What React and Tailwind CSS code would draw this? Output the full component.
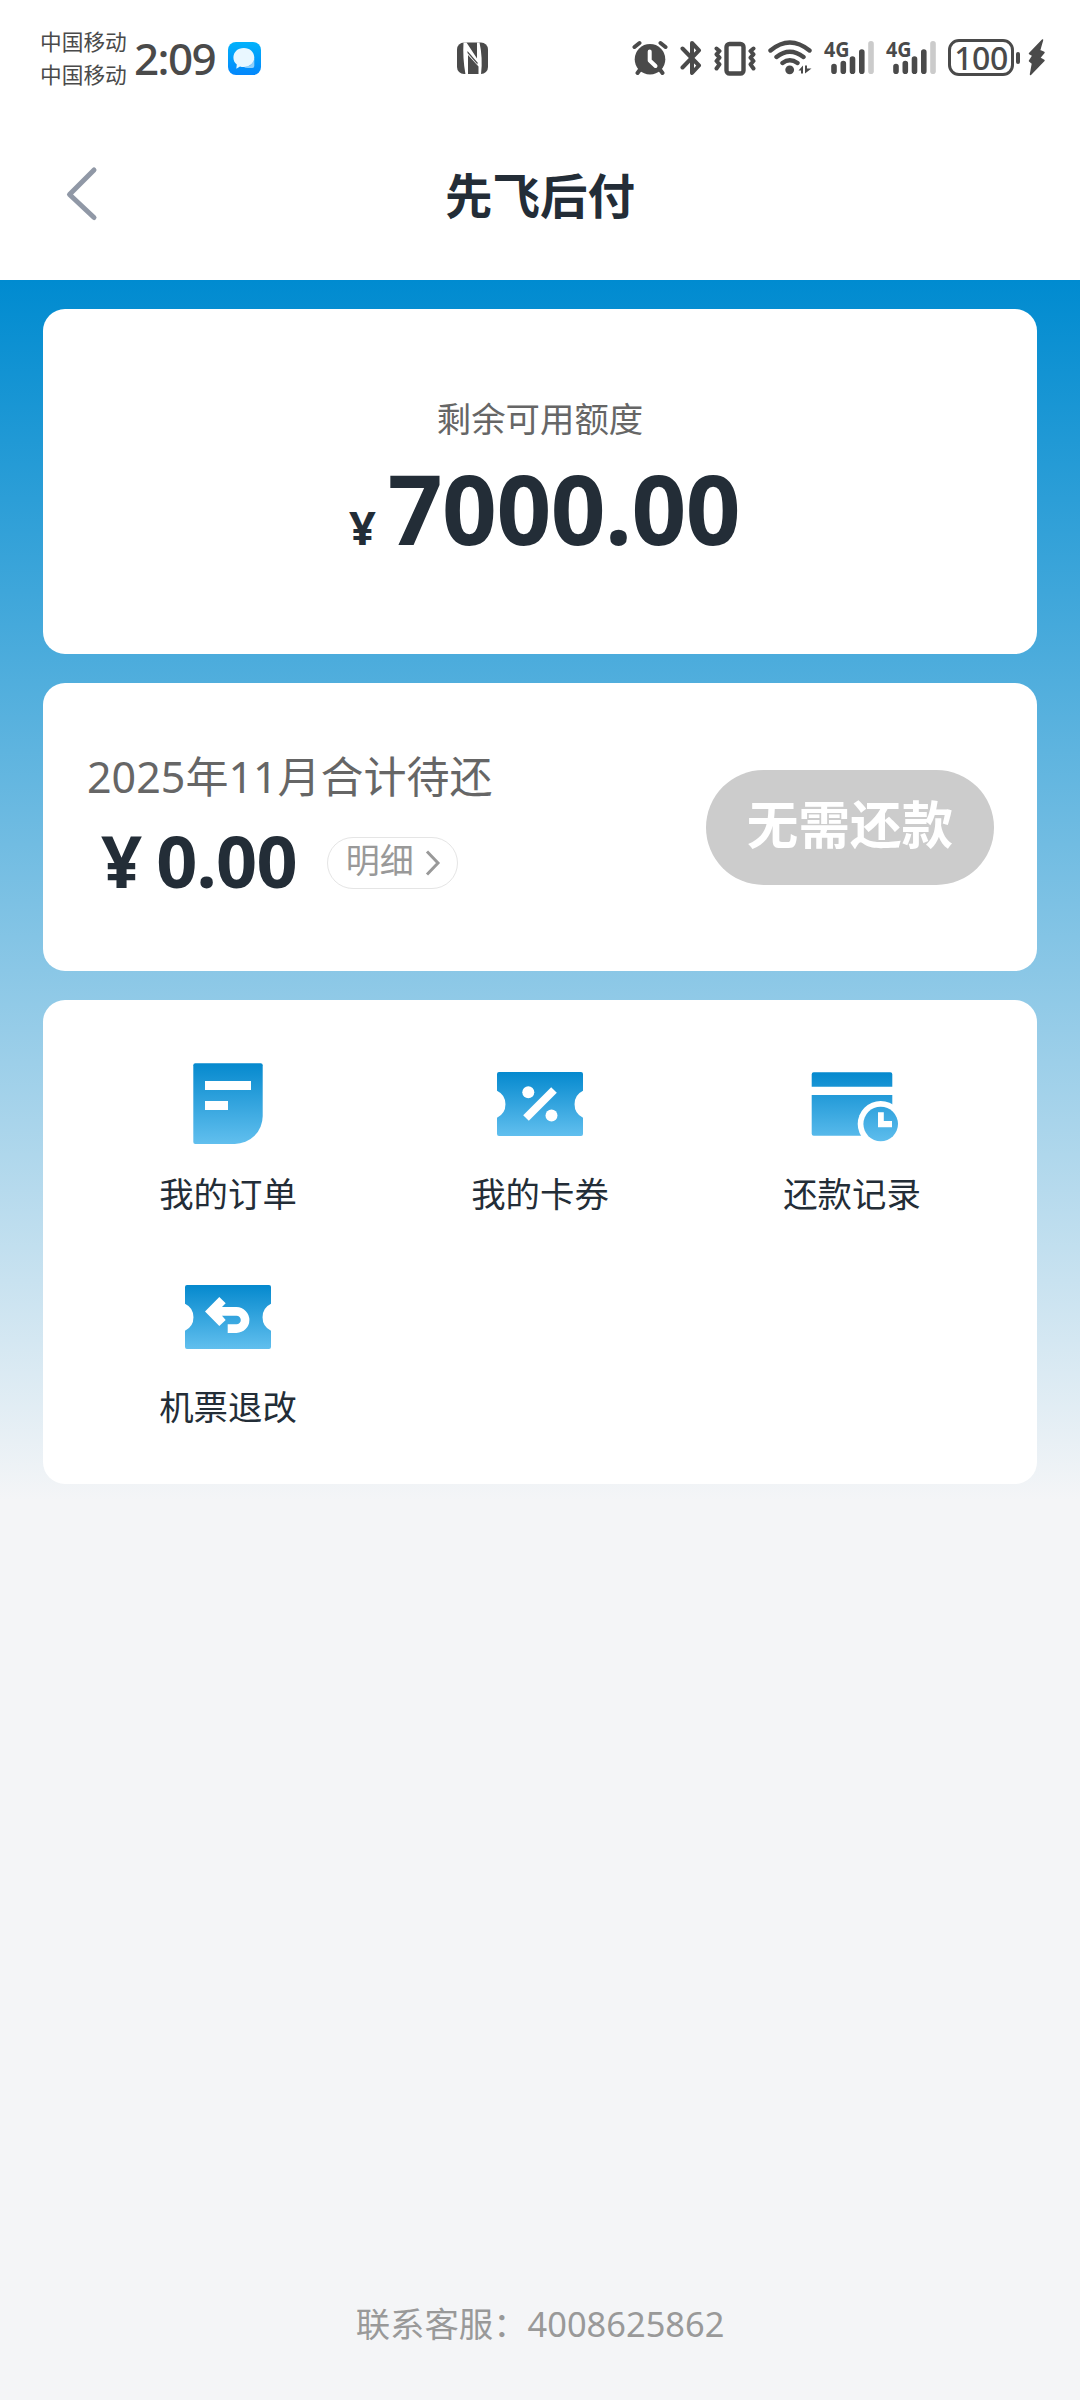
const menuItems = [
    { id: 'orders', label: '我的订单', Icon: OrderIcon },
    { id: 'coupons', label: '我的卡券', Icon: CouponIcon },
    { id: 'records', label: '还款记录', Icon: RecordIcon },
    { id: 'refund', label: '机票退改', Icon: RefundIcon },
];

const TICKET = 'M3 12H85Q87 12 87 14V30.7A15 15 0 0 0 87 57.7V74Q87 76 85 76H3Q1 76 1 74V57.7A15 15 0 0 0 1 30.7V14Q1 12 3 12Z';

function BlueGradient({ id, from = 12, to = 76 }) {
    return (
        <defs>
            <linearGradient id={id} gradientUnits="userSpaceOnUse" x1="0" y1={from} x2="0" y2={to}>
                <stop offset="0" stopColor="#0589ce" />
                <stop offset="1" stopColor="#61bfee" />
            </linearGradient>
        </defs>
    );
}

function OrderIcon() {
    return (
        <svg className="size-[88px]" viewBox="0 0 88 88">
            <BlueGradient id="order" from={3} to={84} />
            <path d="M11.3 3.3H76.7Q78.7 3.3 78.7 5.3V56A28 28 0 0 1 50.7 84H11.3Q9.3 84 9.3 82V5.3Q9.3 3.3 11.3 3.3Z" fill="url(#order)" />
            <path d="M21 21H67V30H21ZM21 41H44V50H21Z" fill="#fff" />
        </svg>
    );
}

function CouponIcon() {
    return (
        <svg className="size-[88px]" viewBox="0 0 88 88">
            <BlueGradient id="coupon" />
            <path d={TICKET} fill="url(#coupon)" />
            <path d="M30 58 58 30" stroke="#fff" strokeWidth="8" />
            <circle cx="32.3" cy="32.3" r="6" fill="#fff" />
            <circle cx="55.5" cy="55.5" r="6" fill="#fff" />
        </svg>
    );
}

function RecordIcon() {
    return (
        <svg className="w-[92px] h-[88px] ml-[4px]" viewBox="0 0 92 88">
            <BlueGradient id="record" to={84} />
            <path d="M5.7 12.2H82.3Q84.3 12.2 84.3 14.2V26.7H3.7V14.2Q3.7 12.2 5.7 12.2ZM3.7 35H84.3V75.7H5.7Q3.7 75.7 3.7 73.7Z" fill="url(#record)" />
            <circle cx="72.7" cy="64" r="23" fill="#fff" />
            <circle cx="72.7" cy="64" r="17.3" fill="url(#record)" />
            <path d="M70 52.3H75.8V61H84V67.3H70Z" fill="#fff" />
        </svg>
    );
}

function RefundIcon() {
    return (
        <svg className="size-[88px]" viewBox="0 0 88 88">
            <BlueGradient id="refund" />
            <path d={TICKET} fill="url(#refund)" />
            <path d="M34 38.4H52.5A8.6 8.6 0 0 1 52.5 55.6H43.7" fill="none" stroke="#fff" strokeWidth="8.6" />
            <path d="M21 38.4 35.3 24 41.7 30.3 38 34V42.7L41.7 47 35.3 53Z" fill="#fff" />
        </svg>
    );
}

function Signal() {
    return (
        <svg className="w-[50px] h-[44px] overflow-visible" viewBox="0 0 50 44">
            <text x="0" y="21" fontSize="22" fontWeight="700" textLength="25.5" lengthAdjust="spacingAndGlyphs" fill="#4a4a4a">4G</text>
            <g strokeWidth="5.6" strokeLinecap="round" stroke="#4a4a4a">
                <path d="M10 30.5V35.2M19.3 27.5V35.2M28.5 23V35.2M37.8 16V35.2" />
                <path d="M47 7.8V35.2" stroke="#cbcbcb" />
            </g>
        </svg>
    );
}

function StatusBar() {
    return (
        <div className="h-[116px] flex items-start text-[#4a4a4a]">
            <div className="pl-[40px] pt-[25px] w-[134px] text-[21.7px] leading-[33px] whitespace-nowrap">
                <p>中国移动</p>
                <p>中国移动</p>
            </div>
            <div className="w-[94px] pt-[28px] text-[44px] leading-[60px] font-medium tracking-[-1.6px]">2:09</div>
            <svg className="mt-[42px] size-[33px]" viewBox="0 0 33 33">
                <defs>
                    <linearGradient id="msg" x1="0" y1="0" x2="0" y2="1">
                        <stop offset="0" stopColor="#02b2fb" />
                        <stop offset="1" stopColor="#0487fb" />
                    </linearGradient>
                </defs>
                <rect width="33" height="33" rx="8" fill="url(#msg)" />
                <path d="M26.3 16.5V24Q26.3 26 24.3 26H20Q17 26 16 25 25 24.5 26.3 16.5Z" fill="#8fd0fb" />
                <path d="M15.8 6C22 6 26.3 10.2 26.3 15.6S22 25 15.8 25Q13.5 25 12 24.5L8.3 26.7 8.8 22.5C6.5 20.8 5.4 18.5 5.4 15.6 5.4 10.2 9.6 6 15.8 6Z" fill="#e9f7ff" />
            </svg>
            {/* nfc */}
            <svg className="ml-[196px] mt-[42px] w-[31px] h-[33px]" viewBox="0 0 31 33">
                <rect y="0.5" width="31" height="31.5" rx="7" fill="#4a4a4a" />
                <path d="M6.5 0.5Q5.5 16 8.5 32.5H11V13L21.5 24.5V32.5H24Q26 16 22.5 0.5H20V16.5L9.5 0.5Z" fill="#fff" />
                <path d="M10.5 9 20.5 20.5V22.5L10.5 11Z" fill="#4a4a4a" />
            </svg>
            <div className="ml-[144px] mt-[36px] flex">
                {/* alarm */}
                <svg className="w-[36px] h-[44px]" viewBox="0 0 36 44" fill="none" stroke="#4a4a4a" strokeWidth="4" strokeLinecap="round">
                    <circle cx="18" cy="23.3" r="15.3" fill="#4a4a4a" stroke="none" />
                    <path d="M2.5 11 7.5 7M33.5 11 28.5 7M8.5 33 5.5 37M27.5 33 30.5 37" />
                    <path d="M17.7 15.5V24.5L23.5 30" stroke="#fff" strokeLinejoin="round" />
                </svg>
                {/* bluetooth */}
                <svg className="ml-[12px] w-[22px] h-[44px]" viewBox="0 0 22 44" fill="none" stroke="#4a4a4a" strokeWidth="4" strokeLinecap="round" strokeLinejoin="round">
                    <path d="M2.5 12.5 19 29.5 12 37V7L19 14.3 2.5 31.5" />
                </svg>
                {/* vibrate */}
                <svg className="ml-[12px] w-[42px] h-[44px]" viewBox="0 0 42 44" fill="none" stroke="#4a4a4a" strokeWidth="4" strokeLinecap="round" strokeLinejoin="round">
                    <rect x="12.5" y="8" width="17" height="29.5" rx="3" strokeWidth="4.4" />
                    <path d="M2.5 12.5 5.5 15 2.5 18.3 5.5 21.6 2.5 25 5.5 28.3 2.5 32.5M39.5 12.5 36.5 15 39.5 18.3 36.5 21.6 39.5 25 36.5 28.3 39.5 32.5" />
                </svg>
                {/* wifi */}
                <svg className="ml-[12px] w-[44px] h-[44px]" viewBox="0 0 44 44" fill="none" stroke="#4a4a4a" strokeWidth="4.4" strokeLinecap="round">
                    <path d="M2.5 14.5Q21.7 -1.5 41.5 14.5M8.5 21Q21.7 10.5 35.5 21M14.5 27Q21.7 21.5 29.5 27" />
                    <circle cx="21.7" cy="33.8" r="4.4" fill="#4a4a4a" stroke="none" />
                    <path d="M30.5 34.5 35 29.5V37.5H33V34.5ZM37 29.5V37.5L43.5 32.5H39V29.5Z" fill="#4a4a4a" stroke="none" />
                </svg>
                <div className="ml-[12px]"><Signal /></div>
                <div className="ml-[12px]"><Signal /></div>
                {/* battery */}
                <div className="ml-[12px] mt-[3px] w-[66px] h-[37px] rounded-[11px] border-[3px] border-[#4a4a4a] text-[32px] leading-[31px] font-medium text-center tracking-[-0.5px]">100</div>
                <div className="ml-[2px] mt-[16px] w-[4px] h-[12px] rounded-full bg-[#4a4a4a]" />
                <svg className="ml-[8px] w-[18px] h-[44px]" viewBox="0 0 18 44">
                    <path d="M14.5 4 1.5 17.5 5 19.5 1.5 25 4.5 27.5 2.5 38.5 16 24.5 11.5 22 16 16.5 11.5 14.5Z" fill="#4a4a4a" stroke="#4a4a4a" strokeWidth="1.5" strokeLinejoin="round" />
                </svg>
            </div>
        </div>
    );
}

export default function App() {
    return (
        <div className="w-[1080px] h-[2400px] overflow-hidden bg-[#f4f5f7] flex flex-col font-['Noto_Sans','Noto_Sans_CJK_SC',sans-serif] text-[#232d37]">
            <header className="h-[280px] bg-white">
                <StatusBar />
                <div className="h-[158px] px-[64px] grid grid-cols-[1fr_auto_1fr] items-center">
                    <svg className="-mt-[2px] w-[36px] h-[60px]" viewBox="0 0 36 60" fill="none" stroke="#9098a6" strokeWidth="5" strokeLinecap="round" strokeLinejoin="round">
                        <path d="M30 6 5.5 30.5 30 53.5" />
                    </svg>
                    <h1 className="pt-[2px] text-[47.5px] font-bold">先飞后付</h1>
                </div>
            </header>

            <main className="flex-1 px-[43px] pt-[29px] flex flex-col gap-[29px] bg-[linear-gradient(180deg,#008bd0_0px,#f4f5f7_1220px)]">
                <section className="h-[345px] rounded-[22px] bg-white pt-[85px] text-center">
                    <p className="text-[34.4px] leading-[49px] text-[#666]">剩余可用额度</p>
                    <div className="h-[128px] pl-[9px] flex items-baseline justify-center font-bold leading-[130px]">
                        <span className="text-[47px]">¥</span>
                        <span className="ml-[12px] text-[96px] tracking-[-0.6px]">7000.00</span>
                    </div>
                </section>

                <section className="h-[288px] rounded-[22px] bg-white px-[43px] flex items-center justify-between">
                    <div className="h-[162px]">
                        <p className="pt-px pl-px text-[43px] leading-[60px] text-[#666]">2025年11月合计待还</p>
                        <div className="mt-[13px] h-[80px] flex items-center leading-[80px]">
                            <span className="pl-[15px] text-[72px] font-bold">¥</span>
                            <span className="ml-[14px] text-[72px] font-bold tracking-[-0.8px]">0.00</span>
                            <button className="ml-[30px] mt-[5px] w-[131px] h-[52px] rounded-full border border-[#e5e5e5] flex items-center pl-[18px] text-[34px] leading-[44px] text-[#999]">
                                <span className="-mt-[5px]">明细</span>
                                <svg className="ml-[10px] w-[18px] h-[28px]" viewBox="0 0 18 28" fill="none" stroke="#999" strokeWidth="3">
                                    <path d="M3 2.5 14 14 3 25.5" />
                                </svg>
                            </button>
                        </div>
                    </div>
                    <button className="w-[288px] h-[115px] rounded-full bg-[#ccc] pb-[4px] text-[51.6px] font-bold text-white">无需还款</button>
                </section>

                <section className="h-[484px] rounded-[22px] bg-white px-[29px] pt-[60px] grid grid-cols-3 auto-rows-[213px]">
                    {menuItems.map(({ id, label, Icon }) => (
                        <div key={id} className="flex flex-col items-center">
                            <Icon />
                            <p className="mt-[21px] text-[34.4px] leading-[50px]">{label}</p>
                        </div>
                    ))}
                </section>

                <footer className="mt-auto h-[101px] text-center text-[34.4px] leading-[50px] text-[#999]">
                    联系客服：4008625862
                </footer>
            </main>
        </div>
    );
}
